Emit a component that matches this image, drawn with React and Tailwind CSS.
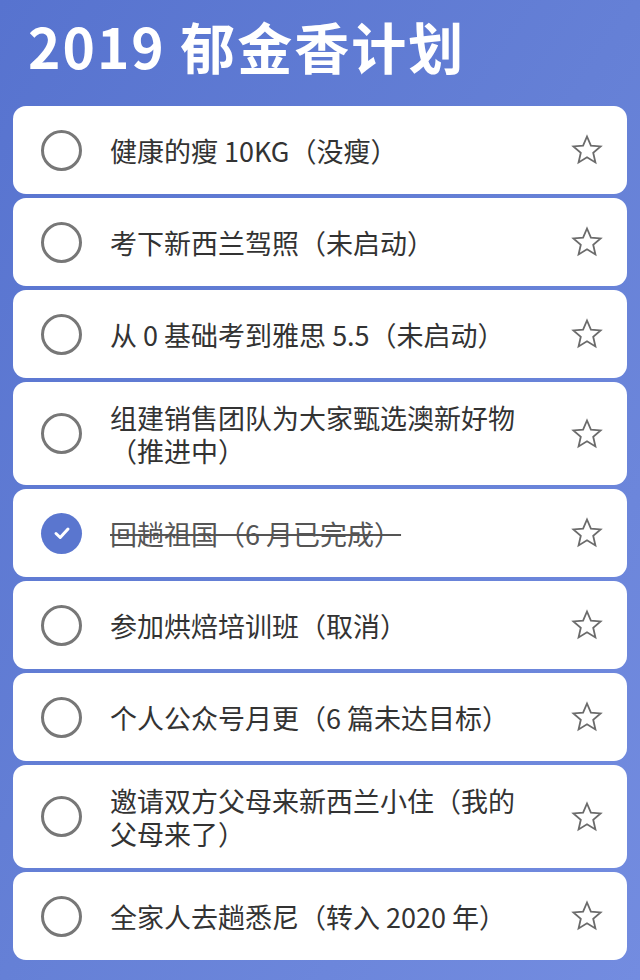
const FONT = '"Noto Sans CJK SC", "Noto Sans", sans-serif'

const items = [
    { text: '健康的瘦 10KG（没瘦）' },
    { text: '考下新西兰驾照（未启动）' },
    { text: '从 0 基础考到雅思 5.5（未启动）' },
    { text: '组建销售团队为大家甄选澳新好物（推进中）', tall: true },
    { text: '回趟祖国（6 月已完成）', done: true },
    { text: '参加烘焙培训班（取消）' },
    { text: '个人公众号月更（6 篇未达目标）' },
    { text: '邀请双方父母来新西兰小住（我的父母来了）', tall: true },
    { text: '全家人去趟悉尼（转入 2020 年）' },
]

function StarIcon() {
    return (
        <svg width="32" height="32" viewBox="0 0 32 32" fill="none">
            <path
                d="M16 2.5 L19.9 11.6 L29.6 12.4 L22.2 18.8 L24.4 28.4 L16 23.3 L7.6 28.4 L9.8 18.8 L2.4 12.4 L12.1 11.6 Z"
                stroke="#6b6b6b"
                strokeWidth="1.8"
                strokeLinejoin="miter"
            />
        </svg>
    )
}

function Check({ done }) {
    if (done) {
        return (
            <div className="w-[41px] h-[41px] rounded-full bg-[#5a76cf] flex items-center justify-center shrink-0">
                <svg width="22" height="22" viewBox="0 0 22 22" fill="none">
                    <path d="M5 11.5 L9.2 15.5 L17 7" stroke="white" strokeWidth="3" strokeLinecap="round" strokeLinejoin="round" />
                </svg>
            </div>
        )
    }
    return <div className="w-[41px] h-[41px] rounded-full border-[3px] border-[#777777] shrink-0" />
}

export default function App() {
    return (
        <div
            className="min-h-[980px] w-[640px] bg-linear-to-br from-[#5773cf] via-[#6580d6] to-[#738ce0] px-[13px]"
            style={{ fontFamily: FONT }}
        >
            {/* header */}
            <div className="pt-[17px] pb-[32px] pl-[15px]">
                <h1 className="text-white text-[55px] leading-[57px] font-bold tracking-[2px]">
                    2019 郁金香计划
                </h1>
            </div>

            {/* goals */}
            <div className="flex flex-col gap-[4px]">
                {items.map(({ text, done, tall }) => (
                    <div
                        key={text}
                        className={`bg-white rounded-[13px] flex items-center pl-[28px] pr-[24px]
              ${tall ? 'h-[103px]' : 'h-[88px]'}`}
                    >
                        <Check done={done} />
                        <p
                            className={`flex-1 ml-[28px] mr-[38px] text-[27px] leading-[33px]
                ${done ? 'text-[#555555] line-through decoration-[#555555] decoration-[1.5px]' : 'text-[#333333]'}`}
                        >
                            {text}
                        </p>
                        <StarIcon />
                    </div>
                ))}
            </div>
        </div>
    )
}
